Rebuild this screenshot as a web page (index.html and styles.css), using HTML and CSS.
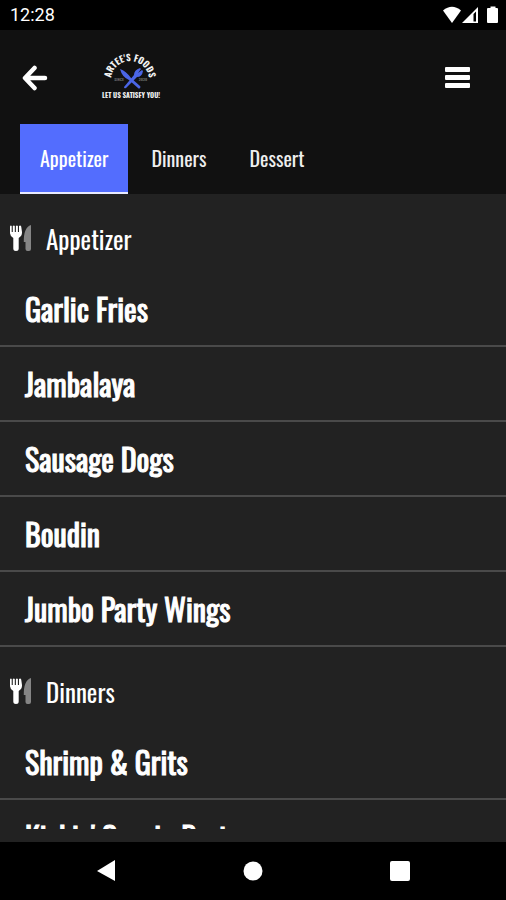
FILE: index.html
```html
<!DOCTYPE html>
<html lang="en">
<head>
<meta charset="utf-8">
<meta name="viewport" content="width=device-width, initial-scale=1">
<title>Artee's Foods</title>
<link rel="stylesheet" href="styles.css">
</head>
<body>
<svg class="defs" aria-hidden="true">
  <symbol id="cutlery" viewBox="0 0 22 26">
    <path fill="#fff" d="M0 1.500Q.6 0 1.700 1v6h1.100V1q1.100-1 2 0v6h1.100V1q1-1 2 0v6H9V1q1.500-1 2.200.5L12 7q.3 4-3.300 6v10.500Q8.700 26 6 26t-2.700-2.500V13Q-.3 11 0 7z"/>
    <path fill="#858585" d="M21 0v24q0 2-2 2h-1.500q-2 0-2-2v-7h-1.700Q13.500 2.500 21 0z"/>
  </symbol>
</svg>
<div class="app">
  <div class="status">
    <span>12:28</span>
    <svg width="56" height="18" viewBox="0 0 56 18" fill="#fff" aria-hidden="true">
      <path d="M1 4.500Q10-3 19 4.500L10 17z"/>
      <path fill-rule="evenodd" d="M20 17 36 1v16zM31.500 8v7.500h2.500V5.500z"/>
      <path d="M47 2h1.500V0.500h5V2H55q1 0 1 1v13q0 1-1 1h-9q-1 0-1-1V3q0-1 1-1z"/>
    </svg>
  </div>
  <header class="top">
    <div class="bar">
      <button class="icon" aria-label="Back">
        <svg width="26" height="26" viewBox="0 0 26 26" fill="none" stroke="#fff" stroke-width="4.500" stroke-linecap="round" stroke-linejoin="round"><path d="M12.500 3 3 13l9.500 10M3.500 13h19.500"/></svg>
      </button>
      <svg class="logo" width="60" height="48" viewBox="0 0 60 48" role="img" aria-label="Artee's Foods">
        <path id="arc" d="M9 26A19 19 0 0 1 47 26" fill="none"/>
        <text class="logo-name"><textPath href="#arc" startOffset="50%">ARTEE'S FOODS</textPath></text>
        <g fill="#4b66e6">
          <path d="M18 15q6 2 11 9l9 8q1 1 0 2t-2 0l-9-8q-7-3-9-11z"/>
          <path d="m38 14 1 1-3 4 4-3 1 1q-1 6-6 6L24 34q-2 1-2-1l10-12q0-5 6-7z"/>
        </g>
        <text class="logo-small" x="17" y="27">SINCE</text>
        <text class="logo-small" x="41" y="27">2020</text>
        <text class="logo-tag" x="29" y="44">LET US SATISFY YOU!</text>
      </svg>
      <button class="icon menu" aria-label="Menu">
        <svg width="26" height="24" viewBox="0 0 26 24" fill="#fff"><rect y="1" width="25" height="5" rx="1"/><rect y="9" width="25" height="5" rx="1"/><rect y="17" width="25" height="5" rx="1"/></svg>
      </button>
    </div>
    <nav class="tabs">
      <a class="tab active" href="#appetizer">Appetizer</a>
      <a class="tab" href="#dinners">Dinners</a>
      <a class="tab" href="#dessert">Dessert</a>
    </nav>
  </header>
  <main class="menu-list">
    <section id="appetizer">
      <h2><svg width="22" height="26" aria-hidden="true"><use href="#cutlery"/></svg>Appetizer</h2>
      <ul>
        <li>Garlic Fries</li>
        <li>Jambalaya</li>
        <li>Sausage Dogs</li>
        <li>Boudin</li>
        <li>Jumbo Party Wings</li>
      </ul>
    </section>
    <section id="dinners">
      <h2><svg width="22" height="26" aria-hidden="true"><use href="#cutlery"/></svg>Dinners</h2>
      <ul>
        <li>Shrimp &amp; Grits</li>
        <li>Kickin' Cousin Pasta</li>
      </ul>
    </section>
  </main>
  <div class="system-nav">
    <button aria-label="System back"><svg width="22" height="22" viewBox="0 0 22 22" fill="#fff"><path d="M2 11 20 0v21z"/></svg></button>
    <button aria-label="Home"><svg width="22" height="22" viewBox="0 0 22 22" fill="#fff"><circle cx="11" cy="11" r="9.500"/></svg></button>
    <button aria-label="Recent apps"><svg width="22" height="22" viewBox="0 0 22 22" fill="#fff"><rect x="1" y="1" width="20" height="20" rx="2"/></svg></button>
  </div>
</div>
</body>
</html>
```
FILE: styles.css
```css
* { box-sizing: border-box; }
body {
  margin: 0;
  background: #222;
  color: #fff;
  font-family: Oswald, "Roboto Condensed", "Liberation Sans", sans-serif;
}
.defs { position: absolute; width: 0; height: 0; }
button { padding: 0; border: 0; background: none; color: inherit; }
svg { display: block; flex: none; }
.app { display: flex; flex-direction: column; height: 100vh; }
.status {
  display: flex;
  align-items: center;
  justify-content: space-between;
  height: 30px;
  padding: 0 8px 0 10px;
  background: #000;
  font: 400 18px/32px Roboto, sans-serif;
}
.top { background: #111; }
.bar { display: flex; align-items: center; height: 94px; padding: 2px 35px 0 22px; }
.logo { margin: 0 auto 0 54px; overflow: visible; }
.logo text { fill: #f2f2f2; text-anchor: middle; font-weight: 700; }
.logo .logo-name { font-size: 9px; }
.logo .logo-tag { font-size: 7px; }
.logo .logo-small { font-size: 4px; fill: #666; }
.tabs { display: flex; gap: 3px; padding: 0 20px; }
.tab {
  padding: 0 20px;
  border-bottom: 2px solid transparent;
  color: #eee;
  font-size: 20px;
  line-height: 68px;
  text-decoration: none;
}
.tab.active { background: #536dfe; border-color: #e8eaff; color: #fff; }
.menu-list { flex: 1; min-height: 0; overflow: hidden; margin-bottom: 13px; }
h2 {
  display: flex;
  align-items: center;
  gap: 14px;
  height: 78px;
  margin: 0;
  padding: 10px 10px 0;
  font-size: 25px;
  font-weight: 400;
}
ul { margin: 0; padding: 0; list-style: none; }
li {
  height: 75px;
  padding: 0 25px;
  border-bottom: 2px solid #4a4a4a;
  font-size: 30px;
  font-weight: 400;
  line-height: 74px;
  -webkit-text-stroke: 1px #fff;
}
.system-nav {
  display: flex;
  align-items: center;
  justify-content: space-around;
  height: 58px;
  padding: 0 33px;
  background: #000;
}
```
